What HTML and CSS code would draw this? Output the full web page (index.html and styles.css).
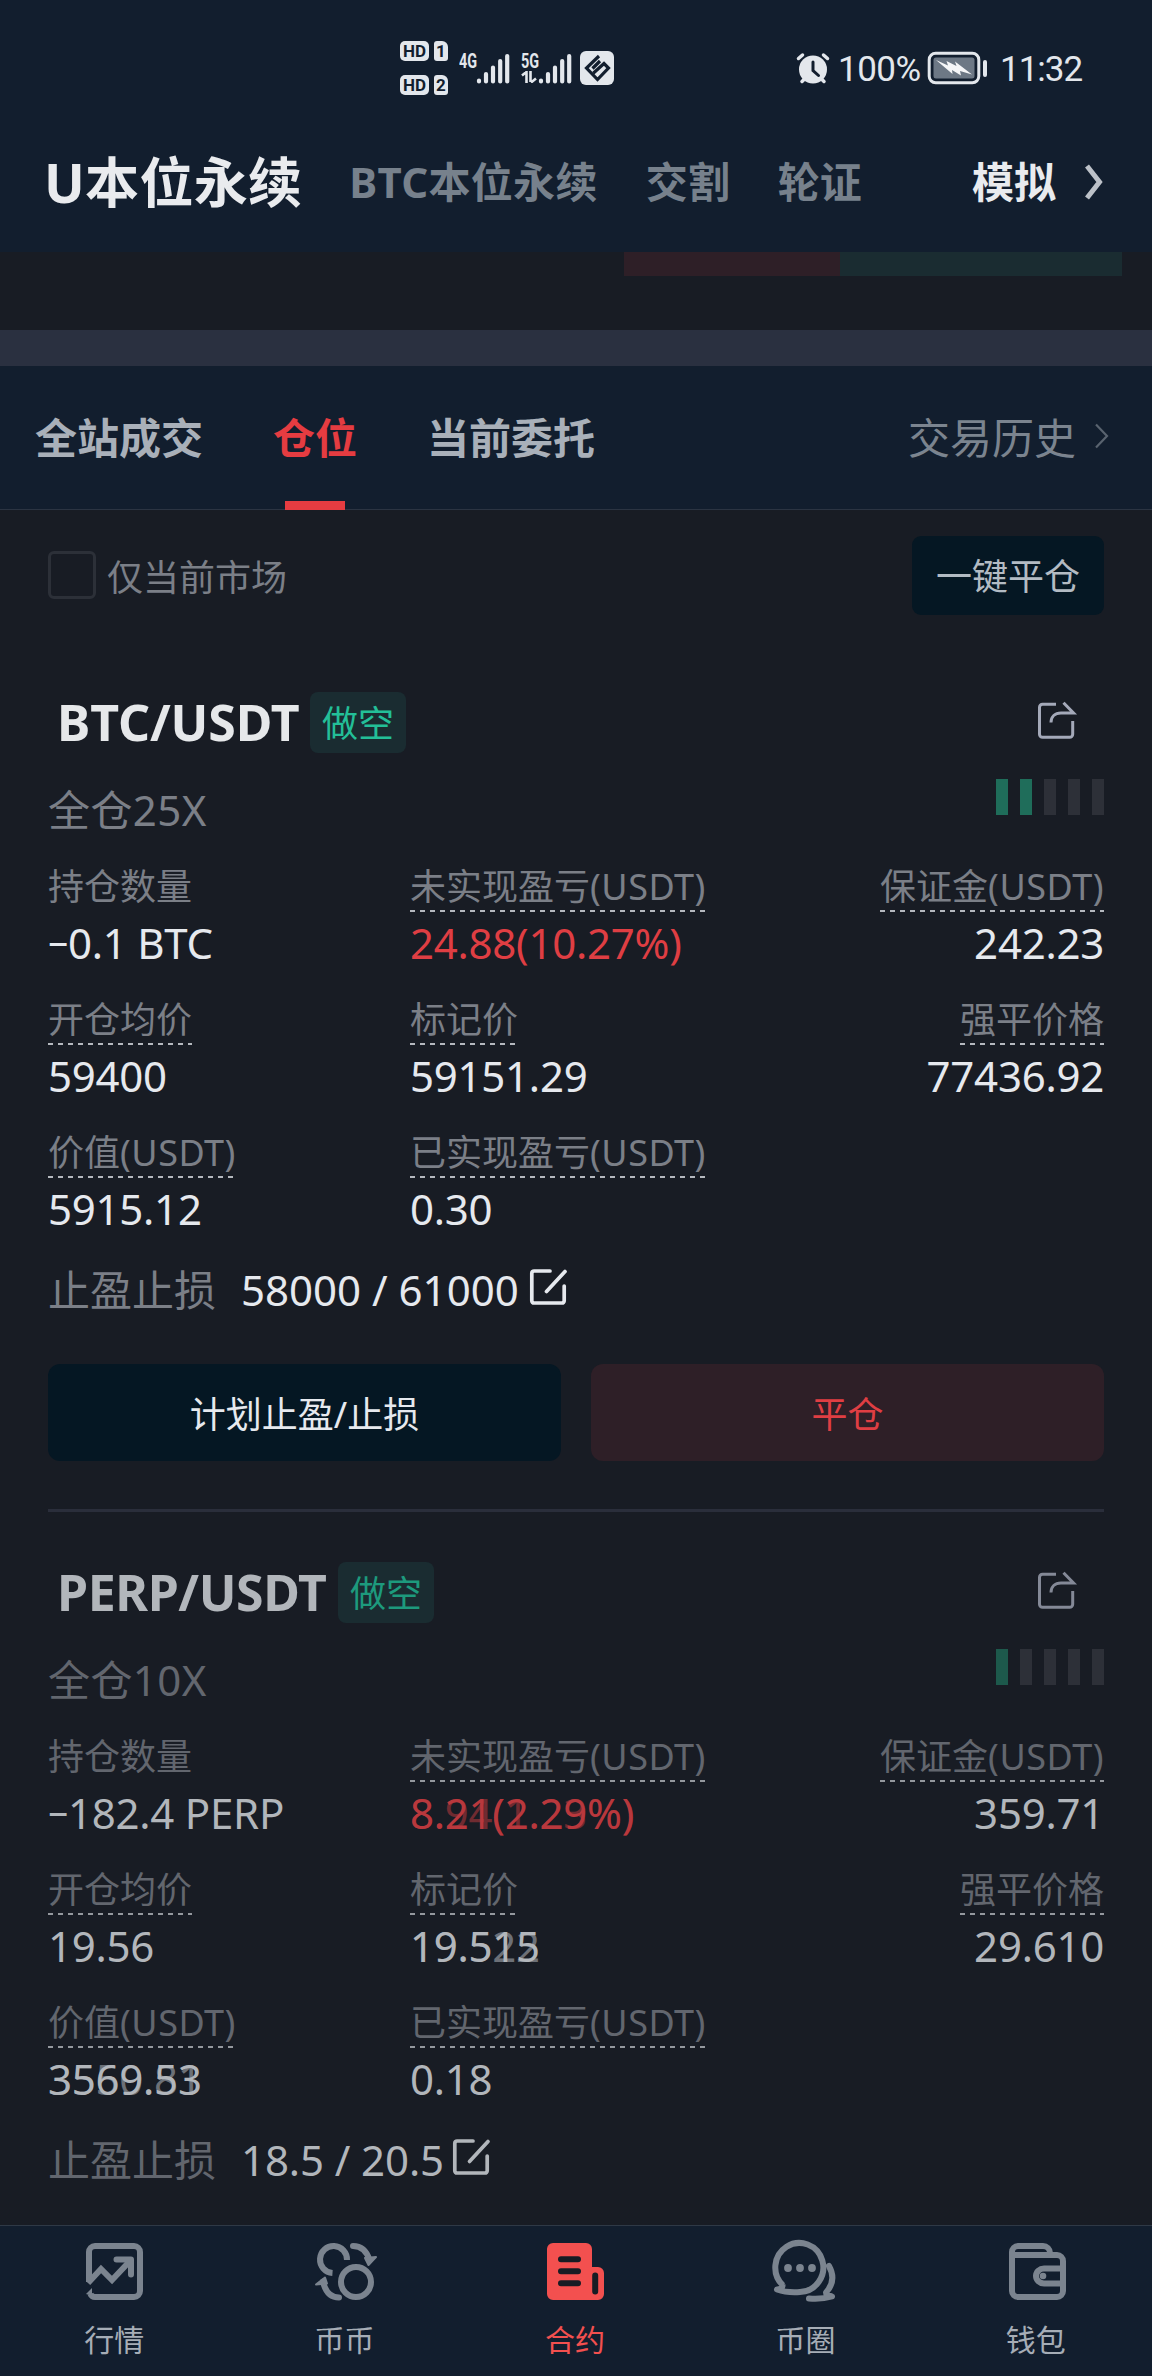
FILE: index.html
```html
<!DOCTYPE html>
<html lang="zh-CN">
<head>
<meta charset="utf-8">
<title>U本位永续</title>
<link rel="stylesheet" href="styles.css">
</head>
<body>
<svg class="defs" width="0" height="0">
  <symbol id="share" viewBox="0 0 42 42"><path d="M20 4.3H6.5a3 3 0 0 0-3 3v27a3 3 0 0 0 3 3h27.200a3 3 0 0 0 3-3V21M15 22.500c0-6 4-9.500 10-9.500h12.500L27.500 2.800" fill="none" stroke="currentColor" stroke-width="3"/></symbol>
  <symbol id="edit" viewBox="0 0 40 40"><path d="M22 4H6a2.200 2.200 0 0 0-2.200 2.200v27.600A2.200 2.200 0 0 0 6 36h28a2.200 2.200 0 0 0 2.200-2.200V19M18.500 24.500L37 4.500" fill="none" stroke="currentColor" stroke-width="3.700" stroke-linecap="round"/></symbol>
  <symbol id="signal" viewBox="0 0 34 32"><path d="M3 29.500v-1M10 29.500V22M17 29.500v-14M24.200 29.500v-20.500M31.200 29.500V4" stroke="currentColor" stroke-width="4.200" stroke-linecap="round"/></symbol>
</svg>
<div class="screen">
  <header class="header">
    <div class="status">
      <div class="hd">
        <div class="hd-row"><span class="hd-tag">HD</span><span class="sim">1</span></div>
        <div class="hd-row"><span class="hd-tag">HD</span><span class="sim">2</span></div>
      </div>
      <div class="net net-4g"><span>4G</span></div>
      <svg class="signal s1"><use href="#signal"/></svg>
      <div class="net net-5g"><span>5G</span>
        <svg width="16" height="12" viewBox="0 0 16 12"><path d="M1 4.500L6 0.500M5.500 0v12M9.500 0v11M10 11.500L15 7.500" stroke="currentColor" stroke-width="2.600" fill="none"/></svg>
      </div>
      <svg class="signal s2"><use href="#signal"/></svg>
      <svg class="app" viewBox="0 0 34 34"><rect width="34" height="34" rx="6" fill="currentColor"/><path d="M19 5L6.500 17 17.500 28.500 28.500 17 24 12.500 13.500 22M12.500 17.500L20 10" fill="none" stroke="#121e2e" stroke-width="3.200"/></svg>
      <svg class="alarm" viewBox="0 0 34 32"><circle cx="17" cy="17.500" r="14" fill="currentColor"/><path d="M2.500 6.500L6.500 3M31.500 6.500L27.500 3M6 29.500l3-3M28 29.500l-3-3" stroke="currentColor" stroke-width="3.500" stroke-linecap="round"/><path d="M17 10v8.500l5.500 5" fill="none" stroke="#121e2e" stroke-width="3" stroke-linecap="round"/></svg>
      <span class="pct">100%</span>
      <svg class="battery" viewBox="0 0 62 34"><rect x="2.200" y="2.200" width="49.600" height="29.600" rx="6.500" fill="none" stroke="currentColor" stroke-width="3"/><rect x="6.500" y="6.500" width="41" height="21" rx="2.500" fill="#6d7885"/><path d="M9 9l12 5.500-1.500-4.500 10 5-1.500-4.500L45 23.500l-12-3.500 1 4.500-9-5.500.5 4z" fill="#f5f6f8"/><rect x="56" y="9" width="4" height="17" rx="2" fill="currentColor"/></svg>
      <span class="time">11:32</span>
    </div>
    <nav class="markets">
      <a class="market on">U本位永续</a>
      <a class="market btc-m">BTC本位永续</a>
      <a class="market">交割</a>
      <a class="market">轮证</a>
      <a class="market demo">模拟</a>
      <svg class="go" viewBox="0 0 20 36"><path d="M3 2l12.500 16L3 34" fill="none" stroke="currentColor" stroke-width="5"/></svg>
    </nav>
  </header>

  <div class="depth"><i class="sell"></i><i class="buy"></i></div>
  <div class="band"></div>

  <nav class="tabs">
    <a class="tab">全站成交</a>
    <a class="tab active">仓位</a>
    <a class="tab">当前委托</a>
    <a class="history">交易历史</a>
    <svg class="more" viewBox="0 0 16 26"><path d="M2 1.500L13 13 2 24.500" fill="none" stroke="currentColor" stroke-width="2.200"/></svg>
  </nav>

  <div class="toolbar">
    <span class="check"></span>
    <span class="only">仅当前市场</span>
    <button class="close-all">一键平仓</button>
  </div>

  <main class="list">
    <section class="card">
      <div class="head">
        <h2 class="pair btc">BTC/USDT</h2><span class="side">做空</span>
        <svg class="share"><use href="#share"/></svg>
      </div>
      <div class="lev"><span class="lev-text">全仓25X</span><div class="risk"><i class="hot"></i><i class="hot"></i><i></i><i></i><i></i></div></div>
      <dl class="grid">
        <div class="cell"><dt>持仓数量</dt><dd><span class="minus">−</span>0.1 BTC</dd></div>
        <div class="cell"><dt class="tip">未实现盈亏<span class="u">(USDT)</span></dt><dd class="red">24.88(10.27%)</dd></div>
        <div class="cell end"><dt class="tip">保证金<span class="u">(USDT)</span></dt><dd>242.23</dd></div>
        <div class="cell"><dt class="tip">开仓均价</dt><dd>59400</dd></div>
        <div class="cell"><dt class="tip">标记价</dt><dd>59151.29</dd></div>
        <div class="cell end"><dt class="tip">强平价格</dt><dd>77436.92</dd></div>
        <div class="cell"><dt class="tip">价值<span class="u">(USDT)</span></dt><dd>5915.12</dd></div>
        <div class="cell"><dt class="tip">已实现盈亏<span class="u">(USDT)</span></dt><dd>0.30</dd></div>
      </dl>
      <div class="stop"><span class="stop-label">止盈止损</span><span class="stop-value">58000 / 61000</span><svg class="edit"><use href="#edit"/></svg></div>
      <div class="actions">
        <button class="btn plan">计划止盈/止损</button>
        <button class="btn flat">平仓</button>
      </div>
    </section>

    <section class="card updating">
      <div class="head">
        <h2 class="pair perp">PERP/USDT</h2><span class="side">做空</span>
        <svg class="share"><use href="#share"/></svg>
      </div>
      <div class="lev"><span class="lev-text">全仓10X</span><div class="risk"><i class="hot"></i><i></i><i></i><i></i><i></i></div></div>
      <dl class="grid">
        <div class="cell"><dt>持仓数量</dt><dd><span class="minus">−</span>182.4 PERP</dd></div>
        <div class="cell"><dt class="tip">未实现盈亏<span class="u">(USDT)</span></dt><dd class="red">8.21(2.29%)<span class="ghost">8.94(1.23%)</span></dd></div>
        <div class="cell end"><dt class="tip">保证金<span class="u">(USDT)</span></dt><dd>359.71</dd></div>
        <div class="cell"><dt class="tip">开仓均价</dt><dd>19.56</dd></div>
        <div class="cell"><dt class="tip">标记价</dt><dd>19.515<span class="ghost">19.522</span></dd></div>
        <div class="cell end"><dt class="tip">强平价格</dt><dd>29.610</dd></div>
        <div class="cell"><dt class="tip">价值<span class="u">(USDT)</span></dt><dd>3569.53<span class="ghost">3550.81</span></dd></div>
        <div class="cell"><dt class="tip">已实现盈亏<span class="u">(USDT)</span></dt><dd>0.18</dd></div>
      </dl>
      <div class="stop"><span class="stop-label">止盈止损</span><span class="stop-value">18.5 / 20.5</span><svg class="edit"><use href="#edit"/></svg></div>
    </section>
  </main>

  <nav class="bottom">
    <a class="item"><svg viewBox="0 0 64 64"><path d="M6 42V12a6 6 0 0 1 6-6h39a6 6 0 0 1 6 6v39a6 6 0 0 1-6 6H12a5 5 0 0 1-4.500-3M5 43L18 29l11 11 17-18" class="ln"/><path d="M33.500 19.500H48v15" class="ln" stroke-linecap="round" stroke-linejoin="round"/><path d="M3 54l6-6v8z" fill="currentColor"/></svg><span>行情</span></a>
    <a class="item"><svg viewBox="0 0 64 64"><path d="M33 20A13.500 13.500 0 1 0 18.500 33" class="ln"/><circle cx="42" cy="42" r="15" class="ln"/><path d="M39 6c9 0 14 6 16.500 14M25 57.500c-9 0-14-7-16-16" class="ln" stroke-linecap="round"/><path d="M51 18l11-1-7.500 8zM2 44.500l9-7 2 6z" fill="currentColor" stroke="currentColor" stroke-width="2" stroke-linejoin="round"/></svg><span>币币</span></a>
    <a class="item sel"><svg viewBox="0 0 64 64"><path d="M9 3h33a6 6 0 0 1 6 6v18h6a6 6 0 0 1 6 6v21a6 6 0 0 1-6 6H9a6 6 0 0 1-6-6V9a6 6 0 0 1 6-6z" fill="currentColor"/><path d="M17 19.300h17M17 31.300h17M17 43.300h17M51.200 35.500v16" stroke="#181c24" stroke-width="6" stroke-linecap="round"/></svg><span>合约</span></a>
    <a class="item"><svg viewBox="4 2 64 64"><path d="M13 47.500A24 24.500 0 1 1 30 54Q17 55 7 51.500Q13 51 12.500 46.500" class="ln" stroke-linejoin="round"/><path d="M59 28c6 11 3 20-3 26.500 0 3 3 3 6 4q-10 3-23 2" class="ln" stroke-linecap="round" stroke-linejoin="round"/><g fill="currentColor"><circle cx="18" cy="30" r="3.900"/><circle cx="30" cy="30" r="3.900"/><circle cx="42" cy="30" r="3.900"/></g></svg><span>币圈</span></a>
    <a class="item"><svg viewBox="0 0 64 64"><path d="M7 15h45a6 6 0 0 1 6 6v30a6 6 0 0 1-6 6H13a6 6 0 0 1-6-6V12a6 6 0 0 1 6-6h25a7 7 0 0 1 7 7v2M58 28.500H39a8 7.500 0 0 0 0 15h19" class="ln"/><circle cx="38" cy="36" r="3.300" fill="currentColor"/></svg><span>钱包</span></a>
  </nav>
</div>
</body>
</html>
```
FILE: styles.css
```css
* { box-sizing: border-box; }
body {
  margin: 0;
  background: #181c24;
  color: #e6e9ee;
  font-family: "Noto Sans", "Noto Sans CJK SC", sans-serif;
}
.defs { position: absolute; }
.screen {
  width: 1152px;
  height: 2376px;
  display: flex;
  flex-direction: column;
  overflow: hidden;
}
svg { display: block; flex: none; }
button { border: 0; padding: 0; font: inherit; }

/* status bar and market switcher */
.header { height: 252px; flex: none; background: #121e2e; }
.status {
  height: 136px;
  padding-left: 400px;
  display: flex;
  align-items: center;
  color: #e3e7ec;
}
.hd { display: flex; flex-direction: column; gap: 14px; width: 59px; }
.hd-row { display: flex; gap: 5px; height: 20px; }
.hd-tag, .sim {
  border-radius: 5px;
  background: #e3e7ec;
  color: #121e2e;
  font: bold 17px/20px Roboto, sans-serif;
  text-align: center;
}
.hd-tag { width: 29px; }
.sim { width: 14px; border-radius: 3px 6px 3px 3px; }
.net { height: 34px; font: bold 20px/20px Roboto, sans-serif; }
.net span { display: block; transform: scaleX(.72); transform-origin: 0 0; width: 20px; }
.net-4g { width: 17px; }
.net-5g { width: 17px; margin-left: 11px; }
.signal { width: 34px; height: 32px; }
.app { width: 34px; height: 34px; margin-left: 8px; }
.alarm { width: 34px; height: 32px; margin-left: 182px; }
.pct, .time { font: 35px/40px Roboto, sans-serif; }
.pct { margin: 3px 0 0 8px; width: 89px; letter-spacing: -.5px; }
.battery { width: 62px; height: 34px; }
.time { margin: 3px 0 0 11px; letter-spacing: -1px; }

.markets {
  height: 92px;
  padding: 0 48px 0 44px;
  display: flex;
  align-items: center;
  gap: 48px;
  font-size: 42px;
  font-weight: 700;
  line-height: 60px;
  color: #77818c;
  white-space: nowrap;
}
.market.on { font-size: 54px; letter-spacing: .3px; color: #e9ebee; margin-right: -1px; }
.market.btc-m { letter-spacing: .3px; }
.market.demo { color: #e9ebee; margin-left: auto; }
.go { width: 20px; height: 36px; color: #bcc1c8; margin-left: -20px; }

/* tail of the order book above the positions */
.depth { height: 78px; flex: none; display: flex; padding-left: 624px; }
.depth i { height: 24px; }
.sell { width: 216px; background: #2e1f27; }
.buy { width: 282px; background: #1a2c31; }
.band { height: 36px; flex: none; background: #2a3040; }

.tabs {
  height: 144px;
  flex: none;
  padding: 0 42px 0 35px;
  display: flex;
  align-items: center;
  gap: 70px;
  background: #121e2e;
  border-bottom: 1px solid #2b3442;
  font-size: 42px;
  line-height: 145px;
  color: #a9b0b9;
}
.tab { font-weight: 700; }
.tab.active { position: relative; color: #e53c41; }
.tab.active::after {
  content: "";
  position: absolute;
  left: 12px;
  bottom: 0;
  width: 60px;
  height: 9px;
  background: #e53c41;
}
.history { margin-left: auto; color: #7b848f; }
.more { width: 16px; height: 26px; margin: -4px 0 0 -52px; color: #59636f; }

.toolbar { height: 132px; flex: none; padding: 26px 48px 0; display: flex; align-items: flex-start; }
.check { width: 48px; height: 48px; margin-top: 15px; border: 3px solid #2c3038; border-radius: 6px; }
.only { margin-left: 11px; font-size: 36px; line-height: 84px; color: #7b7f87; }
.close-all {
  margin-left: auto;
  width: 192px;
  height: 79px;
  border-radius: 9px;
  background: #051723;
  color: #b3bbc3;
  font-size: 36px;
  line-height: 82px;
}

/* position cards */
.list { flex: 1; min-height: 0; overflow: hidden; padding: 0 48px; }
.card { padding: 50px 0 48px; display: flex; flex-direction: column; gap: 26px; border-bottom: 3px solid #2a2e3b; }
.head { height: 61px; padding-left: 9px; display: flex; align-items: center; }
.pair { margin: 0; font-size: 50px; font-weight: 700; line-height: 65px; letter-spacing: -.1px; color: #e6e8ea; white-space: nowrap; }
.pair.btc { width: 253px; }
.pair.perp { width: 281px; letter-spacing: -.4px; }
.side {
  width: 96px;
  height: 61px;
  border-radius: 8px;
  background: #1a2c31;
  color: #23bf98;
  font-size: 36px;
  line-height: 64px;
  text-align: center;
}
.share { width: 42px; height: 42px; margin: -4px 26px 0 auto; color: #a4a9b9; }
.lev { height: 60px; display: flex; justify-content: space-between; }
.lev-text { font-size: 42px; line-height: 61px; letter-spacing: .4px; color: #7b7f87; }
.risk { display: flex; gap: 12px; }
.risk i { width: 12px; height: 36px; background: #2d3038; }
.risk .hot { background: #1f6d5a; }
.grid { margin: 0; display: grid; grid-template-columns: 362px 362px 1fr; gap: 26px 0; }
.cell { display: flex; flex-direction: column; align-items: flex-start; }
.cell.end { align-items: flex-end; }
dt { height: 47px; font-size: 36px; line-height: 44px; color: #7b7f87; white-space: nowrap; }
.u { letter-spacing: .5px; }
.tip {
  background: repeating-linear-gradient(90deg, #b4b8be 0 5px, transparent 5px 10px) 0 100% / 100% 2px no-repeat;
}
dd { margin: 0; position: relative; height: 60px; font-size: 42px; line-height: 62px; letter-spacing: -.25px; white-space: nowrap; }
.minus { display: inline-block; width: 20px; transform: scaleX(.85); transform-origin: 0 50%; }
.red { color: #df3e43; }
.ghost { position: absolute; left: 0; top: 0; opacity: .55; }
.stop { height: 50px; display: flex; align-items: center; font-size: 42px; line-height: 51px; }
.stop-label { width: 193px; color: #7b7f87; }
.edit { width: 40px; height: 40px; margin: -4px 0 0 9px; }
.updating .edit { margin-left: 7px; }
.updating .stop-value { letter-spacing: -.1px; }
.actions { margin-top: 24px; display: flex; gap: 30px; }
.btn { flex: 1; height: 97px; border-radius: 12px; font-size: 36px; line-height: 101px; }
.plan { background: #051723; color: #e6e9ee; }
.flat { background: #2e1f27; color: #df3e43; }

.updating { color: #b2b6bb; }
.updating .pair { color: #b2b6bb; }
.updating .side { color: #1d9a7d; }
.updating .share { color: #848997; }
.updating .lev-text, .updating dt, .updating .stop-label { color: #62666e; }
.updating .risk .hot { background: #1d594c; }
.updating .red { color: #b9383d; }
.updating .tip { background-image: repeating-linear-gradient(90deg, #94989e 0 5px, transparent 5px 10px); }

.bottom { height: 151px; flex: none; display: flex; background: #121e2e; border-top: 1px solid #2f3946; }
.item { flex: 1; padding-top: 14px; display: flex; flex-direction: column; align-items: center; color: #7b848f; }
.item svg { width: 64px; height: 64px; overflow: visible; }
.item span { margin: 16px 2px 0 0; font-size: 30px; line-height: 40px; color: #a6adb6; }
.item.sel, .item.sel span { color: #f3504f; }
.ln { fill: none; stroke: currentColor; stroke-width: 6; }
```
